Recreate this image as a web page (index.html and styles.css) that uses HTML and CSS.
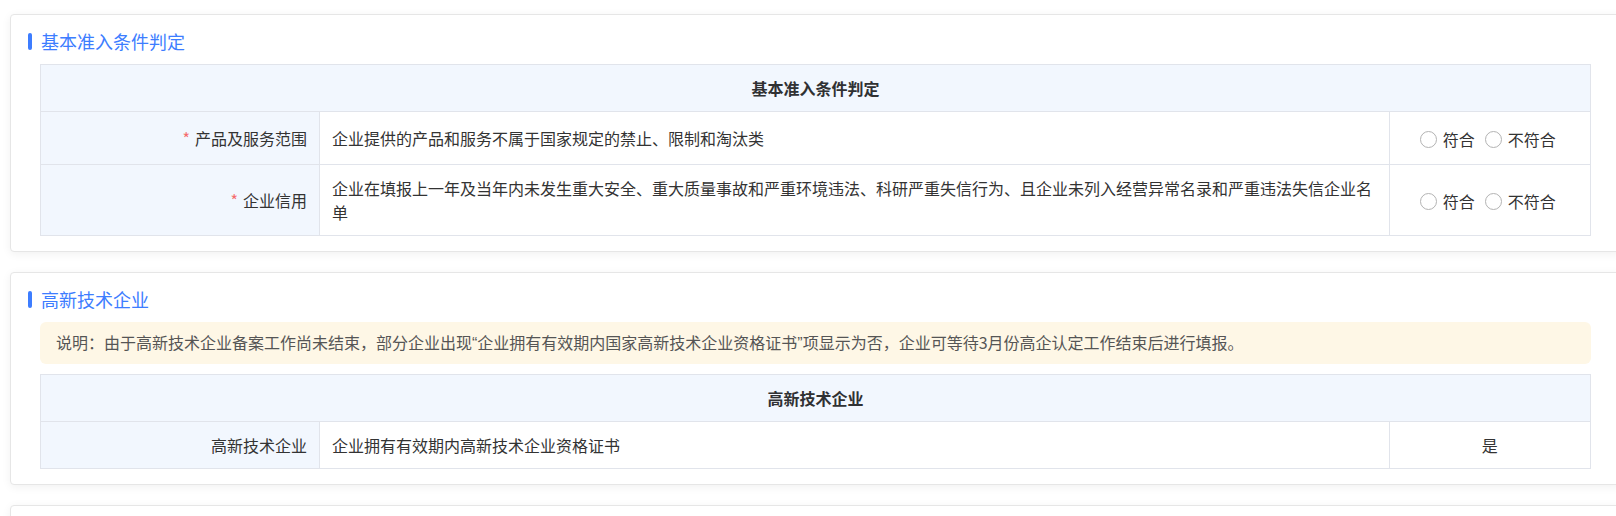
FILE: index.html
```html
<!DOCTYPE html>
<html lang="zh-CN">
<head>
    <meta charset="UTF-8">
    <meta name="viewport" content="width=device-width, initial-scale=1.0">
    <title>企业填报</title>
    <link rel="stylesheet" href="styles.css">
</head>
<body>
    <div class="page">
        <div class="card">
            <div class="card-title"><span class="title-bar"></span>基本准入条件判定</div>
            <table class="form-table">
                <colgroup>
                    <col class="col-label">
                    <col>
                    <col class="col-value">
                </colgroup>
                <tr>
                    <th colspan="3">基本准入条件判定</th>
                </tr>
                <tr>
                    <td class="label"><span class="required">*</span>产品及服务范围</td>
                    <td class="desc">企业提供的产品和服务不属于国家规定的禁止、限制和淘汰类</td>
                    <td class="value">
                        <div class="radio-group">
                            <label class="radio"><span class="radio-circle"></span>符合</label>
                            <label class="radio"><span class="radio-circle"></span>不符合</label>
                        </div>
                    </td>
                </tr>
                <tr>
                    <td class="label"><span class="required">*</span>企业信用</td>
                    <td class="desc">企业在填报上一年及当年内未发生重大安全、重大质量事故和严重环境违法、科研严重失信行为、且企业未列入经营异常名录和严重违法失信企业名单</td>
                    <td class="value">
                        <div class="radio-group">
                            <label class="radio"><span class="radio-circle"></span>符合</label>
                            <label class="radio"><span class="radio-circle"></span>不符合</label>
                        </div>
                    </td>
                </tr>
            </table>
        </div>

        <div class="card">
            <div class="card-title"><span class="title-bar"></span>高新技术企业</div>
            <div class="notice">说明：由于高新技术企业备案工作尚未结束，部分企业出现<span class="quote">“</span>企业拥有有效期内国家高新技术企业资格证书<span class="quote">”</span>项显示为否，企业可等待3月份高企认定工作结束后进行填报。</div>
            <table class="form-table">
                <colgroup>
                    <col class="col-label">
                    <col>
                    <col class="col-value">
                </colgroup>
                <tr>
                    <th colspan="3">高新技术企业</th>
                </tr>
                <tr>
                    <td class="label">高新技术企业</td>
                    <td class="desc">企业拥有有效期内高新技术企业资格证书</td>
                    <td class="value">是</td>
                </tr>
            </table>
        </div>

        <div class="card card-empty"></div>
    </div>
</body>
</html>
```

FILE: styles.css
```css
html,
body {
    margin: 0;
    overflow: hidden;
    background-color: #fff;
}

body {
    font-family: "Noto Sans CJK SC", "Noto Sans", sans-serif;
    font-size: 16px;
    color: #303133;
}

.page {
    width: 1611px;
    padding: 14px 0 0 10px;
    display: flex;
    flex-direction: column;
    gap: 20px;
}

.card {
    background-color: #fff;
    border: 1px solid #e6e6e6;
    border-radius: 4px;
    box-shadow: 0 2px 10px rgba(0, 0, 0, 0.06);
    padding: 14px 29px 15px 29px;
}

.card-empty {
    height: 120px;
}

.card-title {
    display: flex;
    align-items: center;
    font-size: 18px;
    line-height: 24px;
    color: #3d7dff;
    margin-left: -12px;
    margin-bottom: 11px;
}

.title-bar {
    width: 4px;
    height: 17px;
    border-radius: 2px;
    background-color: #3d7dff;
    margin-right: 9px;
}

.notice {
    background-color: #fef7e6;
    border-radius: 6px;
    padding: 8px 16px;
    line-height: 24px;
    color: #555;
    margin-bottom: 10px;
}

.quote {
    font-family: "Liberation Sans", sans-serif;
}

.form-table {
    width: 100%;
    border-collapse: collapse;
    table-layout: fixed;
}

.col-label {
    width: 18%;
}

.col-value {
    width: 13%;
}

.form-table th,
.form-table td {
    border: 1px solid #e1e4eb;
    padding: 11px 12px;
    line-height: 24px;
    vertical-align: middle;
}

.form-table th {
    background-color: #f2f7fe;
    font-weight: bold;
    text-align: center;
}

.form-table .label {
    background-color: #f2f7fe;
    text-align: right;
    color: #333;
}

.form-table .desc {
    text-align: left;
    color: #333;
}

.form-table .value {
    text-align: center;
    color: #333;
}

.required {
    color: #f56c6c;
    margin-right: 5px;
}

.radio-group {
    display: inline-flex;
    align-items: center;
    gap: 10px;
    padding-top: 5px;
    height: 23px;
    margin-left: -4px;
}

.radio {
    display: inline-flex;
    align-items: center;
    line-height: 23px;
    cursor: pointer;
}

.radio-circle {
    width: 17px;
    height: 17px;
    box-sizing: border-box;
    border: 1px solid #b3b3b3;
    border-radius: 50%;
    margin-right: 6px;
}
```
